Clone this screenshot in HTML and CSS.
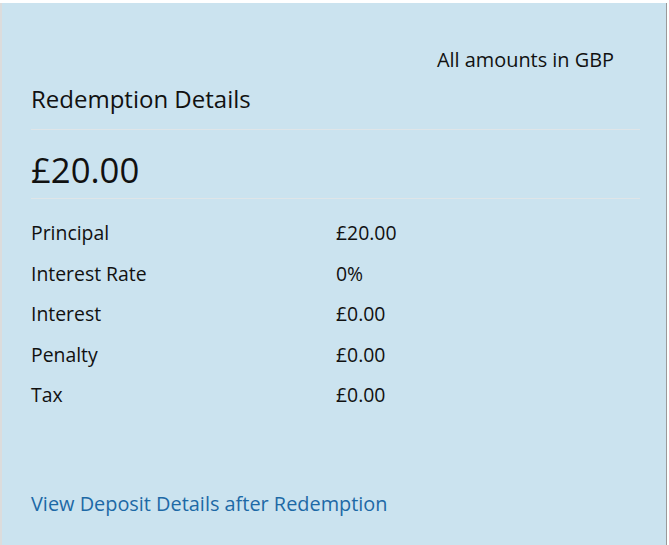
FILE: index.html
```html
<!DOCTYPE html>
<html>
<head>
<meta charset="utf-8">
<link rel="stylesheet" href="styles.css">
</head>
<body>
<div class="panel">
  <div class="currency-note">All amounts in GBP</div>
  <h2 class="title">Redemption Details</h2>
  <div class="total">£20.00</div>
  <div class="rows">
    <div class="row"><span class="label">Principal</span><span class="value">£20.00</span></div>
    <div class="row"><span class="label">Interest Rate</span><span class="value">0%</span></div>
    <div class="row"><span class="label">Interest</span><span class="value">£0.00</span></div>
    <div class="row"><span class="label">Penalty</span><span class="value">£0.00</span></div>
    <div class="row"><span class="label">Tax</span><span class="value">£0.00</span></div>
  </div>
  <a class="link" href="#">View Deposit Details after Redemption</a>
</div>
</body>
</html>
```

FILE: styles.css
```css
html, body {
  margin: 0;
  padding: 0;
  background: #ffffff;
  height: 100%;
}
body {
  font-family: "Open Sans", "Noto Sans", sans-serif;
  color: #111;
}
.panel {
  box-sizing: border-box;
  margin: 3px 2px 0 0;
  height: calc(100% - 3px);
  background: #cbe3ef;
  border-left: 2px solid #dcdcdc;
  border-right: 1px solid #9a9a9a;
  padding: 0 26px 0 29px;
  display: flex;
  flex-direction: column;
}
.currency-note {
  font-size: 19.9px;
  text-align: right;
  padding: 45px 26px 0 0;
  line-height: 24px;
}
.title {
  font-weight: normal;
  font-size: 24px;
  margin: 0;
  padding: 12px 0 15px;
  line-height: 30px;
  border-bottom: 1px solid #dfe5e8;
}
.total {
  font-size: 34.7px;
  line-height: 48px;
  padding: 16px 0 4px;
  border-bottom: 1px solid #dfe5e8;
}
.rows {
  padding-top: 22px;
  display: flex;
  flex-direction: column;
}
.row {
  display: flex;
  font-size: 19.4px;
  line-height: 24px;
  height: 40.6px;
}
.label {
  width: 305px;
}
.link {
  margin-top: 66px;
  font-size: 19.9px;
  color: #1d69a6;
  text-decoration: none;
  line-height: 28px;
}
```
